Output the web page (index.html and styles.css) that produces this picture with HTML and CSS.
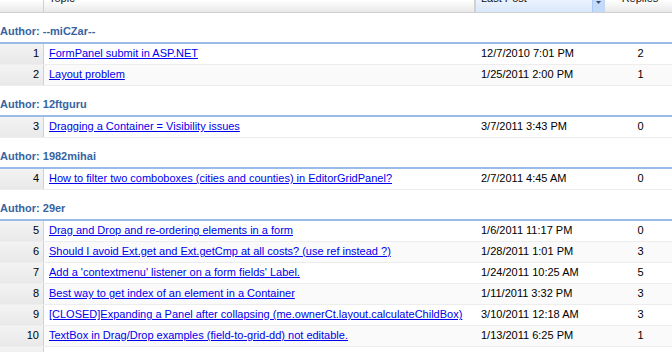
FILE: index.html
```html
<!DOCTYPE html>
<html>
<head>
<meta charset="utf-8">
<link rel="stylesheet" href="styles.css">
</head>
<body>
<div class="grid">
  <div class="hd">
    <div class="hc num"></div>
    <div class="hc"><span class="ht">Topic</span></div>
    <div class="hc sorted"><span class="ht">Last Post</span><span class="trig"><svg width="5" height="3" viewBox="0 0 5 3"><path d="M0 0h5L2.5 3z" fill="#3a4e6c"/></svg></span></div>
    <div class="hc center"><span class="ht">Replies</span></div>
  </div>

  <div class="group">Author: --miCZar--</div>
  <div class="row"><div class="c num">1</div><div class="c"><a href="#">FormPanel submit in ASP.NET</a></div><div class="c date">12/7/2010 7:01 PM</div><div class="c center">2</div></div>
  <div class="row alt"><div class="c num">2</div><div class="c"><a href="#">Layout problem</a></div><div class="c date">1/25/2011 2:00 PM</div><div class="c center">1</div></div>

  <div class="group">Author: 12ftguru</div>
  <div class="row"><div class="c num">3</div><div class="c"><a href="#">Dragging a Container = Visibility issues</a></div><div class="c date">3/7/2011 3:43 PM</div><div class="c center">0</div></div>

  <div class="group">Author: 1982mihai</div>
  <div class="row"><div class="c num">4</div><div class="c"><a href="#">How to filter two comboboxes (cities and counties) in EditorGridPanel?</a></div><div class="c date">2/7/2011 4:45 AM</div><div class="c center">0</div></div>

  <div class="group">Author: 29er</div>
  <div class="row"><div class="c num">5</div><div class="c"><a href="#">Drag and Drop and re-ordering elements in a form</a></div><div class="c date">1/6/2011 11:17 PM</div><div class="c center">0</div></div>
  <div class="row alt"><div class="c num">6</div><div class="c"><a href="#">Should I avoid Ext.get and Ext.getCmp at all costs? (use ref instead ?)</a></div><div class="c date">1/28/2011 1:01 PM</div><div class="c center">3</div></div>
  <div class="row"><div class="c num">7</div><div class="c"><a href="#">Add a 'contextmenu' listener on a form fields' Label.</a></div><div class="c date">1/24/2011 10:25 AM</div><div class="c center">5</div></div>
  <div class="row alt"><div class="c num">8</div><div class="c"><a href="#">Best way to get index of an element in a Container</a></div><div class="c date">1/11/2011 3:32 PM</div><div class="c center">3</div></div>
  <div class="row"><div class="c num">9</div><div class="c"><a href="#">[CLOSED]Expanding a Panel after collapsing (me.ownerCt.layout.calculateChildBox)</a></div><div class="c date">3/10/2011 12:18 AM</div><div class="c center">3</div></div>
  <div class="row alt"><div class="c num">10</div><div class="c"><a href="#">TextBox in Drag/Drop examples (field-to-grid-dd) not editable.</a></div><div class="c date">1/13/2011 6:25 PM</div><div class="c center">1</div></div>
  <div class="row"><div class="c num">11</div><div class="c"><a href="#">Grid row selection</a></div><div class="c date">2/2/2011 9:12 AM</div><div class="c center">2</div></div>
</div>
</body>
</html>
```

FILE: styles.css
```css
html, body {
  margin: 0;
  padding: 0;
  background: #fff;
  overflow: hidden;
}
body {
  width: 672px;
  height: 352px;
  font-family: "Liberation Sans", Arial, sans-serif;
  font-size: 11px;
  color: #000;
}
.grid {
  width: 676px;
}
.hd, .row {
  display: grid;
  grid-template-columns: 44px 431px 130px 71px;
}
.hd {
  height: 12px;
  overflow: hidden;
  border-bottom: 1px solid #d0d0d0;
  background: linear-gradient(#ffffff, #e9e9ea);
}
.hc {
  position: relative;
  border-right: 1px solid #d0d0d0;
  padding-left: 5px;
  overflow: hidden;
}
.hc.num {
  padding: 0;
}
.ht {
  display: block;
  line-height: 13px;
  margin-top: -8px;
  color: #111;
}
.hc.sorted {
  background: linear-gradient(#ebf3fd, #d9e8fb);
  border-left: 1px solid #c3d6ef;
  border-right: 1px solid #c3d6ef;
}
.trig {
  position: absolute;
  right: 0;
  top: 0;
  width: 12px;
  height: 12px;
  background: #c3daf9;
  border-left: 1px solid #aaccf6;
  display: flex;
  justify-content: center;
  align-items: flex-start;
  padding-top: 1px;
  box-sizing: border-box;
}
.center {
  text-align: center;
}
.hc.center {
  padding-left: 0;
}
.group {
  height: 17px;
  padding-top: 12px;
  border-bottom: 2px solid #99bbe8;
  color: #3764a0;
  font-weight: bold;
  line-height: 13px;
}
.row {
  height: 21px;
  box-sizing: border-box;
  background: #fff;
  border-bottom: 1px solid #ededed;
}
.row.alt {
  background: #fafafa;
}
.c {
  line-height: 13px;
  padding: 3px 3px 3px 5px;
  white-space: nowrap;
  overflow: hidden;
}
.c.date {
  padding-left: 6px;
}
.c.num {
  background: linear-gradient(#f3f3f3, #e9e9e9);
  border-right: 1px solid #d0d0d0;
  text-align: right;
  padding-right: 4px;
  padding-left: 0;
}
.c.center {
  padding-left: 0;
  padding-right: 0;
}
a {
  color: #0000ee;
  text-decoration: underline;
}
```
